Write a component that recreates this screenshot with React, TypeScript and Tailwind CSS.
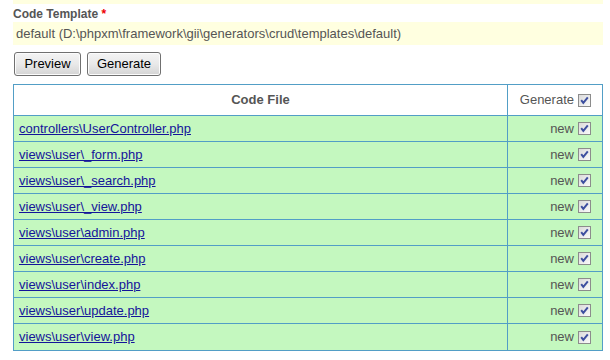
import React from "react";

const files = [
  "controllers\\UserController.php",
  "views\\user\\_form.php",
  "views\\user\\_search.php",
  "views\\user\\_view.php",
  "views\\user\\admin.php",
  "views\\user\\create.php",
  "views\\user\\index.php",
  "views\\user\\update.php",
  "views\\user\\view.php",
];

function Check({ id }: { id: string }) {
  return (
    <svg width="13" height="13" viewBox="0 0 13 13" className="shrink-0">
      <defs>
        <linearGradient id={id} x1="0" y1="0" x2="1" y2="1">
          <stop offset="0" stopColor="#d9d9d9" />
          <stop offset="1" stopColor="#fbfbfb" />
        </linearGradient>
      </defs>
      <rect x="0.5" y="0.5" width="12" height="12" fill={`url(#${id})`} stroke="#8c8c8c" />
      <path d="M3.2 6.2 L5.3 8.8 L9.8 3.4" stroke="#3d4f9f" strokeWidth="2" fill="none" />
    </svg>
  );
}

function Button({ label, w }: { label: string; w: string }) {
  return (
    <div
      className={`${w} h-[24px] flex items-center justify-center rounded-[3px] border border-[#707070] bg-gradient-to-b from-[#f4f4f4] via-[#e9e9e9] to-[#d4d4d4] text-[13px] text-black shadow-[inset_0_0_0_1px_#fcfcfc]`}
    >
      {label}
    </div>
  );
}

export default function App() {
  return (
    <div
      className="w-[610px] h-[360px] bg-white pl-[13px] overflow-hidden"
      style={{ fontFamily: '"Liberation Sans", Arial, sans-serif' }}
    >
      <div className="h-[4px] w-[590px] bg-[#ffffe0]" />
      <div className="mt-[3px] h-[14px] leading-[14px] text-[12px] font-bold text-[#555]">
        Code Template <span className="text-[#e00]">*</span>
      </div>
      <div className="mt-[1px] h-[23px] w-[590px] bg-[#ffffe0] pl-[3px] text-[13px] leading-[23px] text-[#555]">
        default (D:\phpxm\framework\gii\generators\crud\templates\default)
      </div>
      <div className="mt-[7px] ml-[1px] flex gap-[6px]">
        <Button label="Preview" w="w-[67px]" />
        <Button label="Generate" w="w-[74px]" />
      </div>
      <div className="mt-[8px] w-[590px] border border-[#529ec6] text-[13px]">
        <div className="flex h-[31px] border-b border-[#529ec6] bg-white">
          <div className="w-[493px] flex items-center justify-center font-bold text-[#555]">
            Code File
          </div>
          <div className="w-[95px] border-l border-[#529ec6] flex items-center justify-end pr-[11px] gap-[4px] text-[#555]">
            Generate <Check id="hdr" />
          </div>
        </div>
        {files.map((f, i) => (
          <div
            key={f}
            className={`flex h-[26px] bg-[#c4f8bf] ${i < files.length - 1 ? "border-b border-[#529ec6]" : ""}`}
          >
            <div className="w-[493px] flex items-center pl-[5px]">
              <span className="underline text-[#14149a]">{f}</span>
            </div>
            <div className="w-[95px] border-l border-[#529ec6] flex items-center justify-end pr-[11px] gap-[4px] text-[#555]">
              new <Check id={`c${i}`} />
            </div>
          </div>
        ))}
      </div>
    </div>
  );
}
